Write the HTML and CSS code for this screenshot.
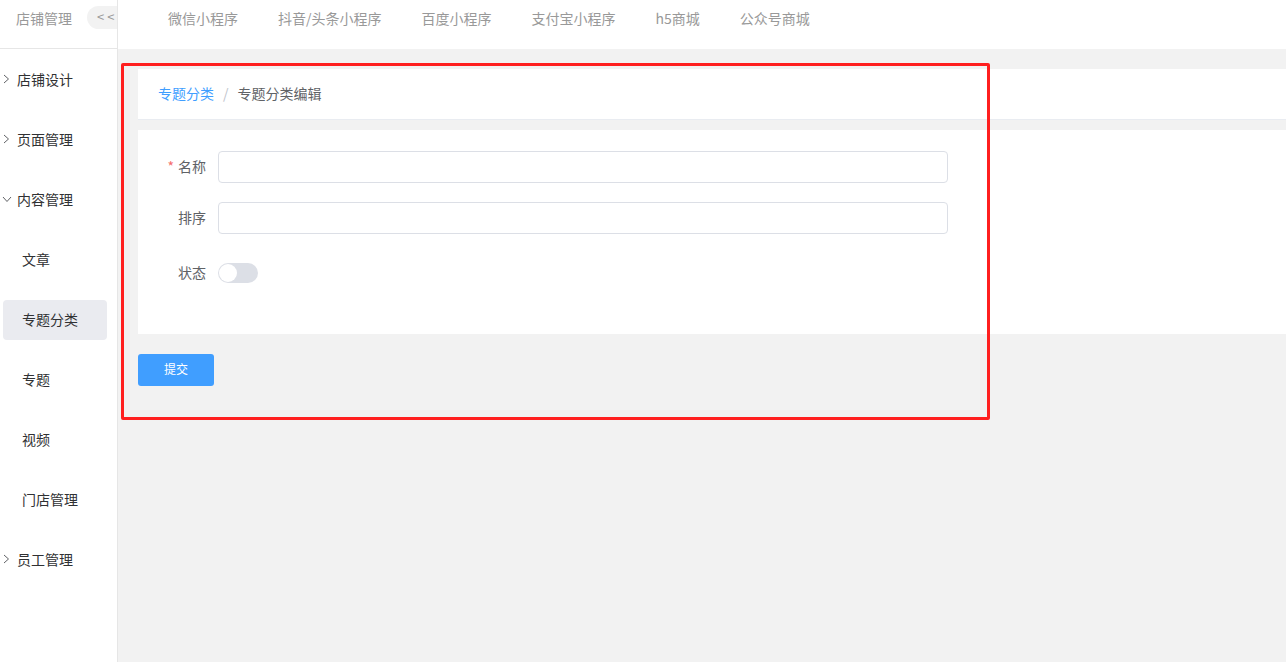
FILE: index.html
```html
<!DOCTYPE html>
<html>

<head>
    <meta charset="utf-8">
    <meta name="viewport" content="width=device-width, initial-scale=1.0">
    <title>专题分类编辑</title>
    <link rel="stylesheet" href="styles.css">
</head>

<body>
    <div class="layout">
        <div class="sidebar">
            <div class="side-head">
                <span class="side-title">店铺管理</span>
                <span class="collapse">&lt;&lt;</span>
            </div>
            <div class="menu">
                <div class="menu-item">
                    <svg class="arrow" width="7" height="10" viewBox="0 0 7 10"><path d="M1 1 L5.5 5 L1 9" fill="none" stroke="#606266" stroke-width="1"/></svg>
                    <span>店铺设计</span>
                </div>
                <div class="menu-item">
                    <svg class="arrow" width="7" height="10" viewBox="0 0 7 10"><path d="M1 1 L5.5 5 L1 9" fill="none" stroke="#606266" stroke-width="1"/></svg>
                    <span>页面管理</span>
                </div>
                <div class="menu-item">
                    <svg class="arrow down" width="10" height="7" viewBox="0 0 10 7"><path d="M1 1 L5 5.5 L9 1" fill="none" stroke="#606266" stroke-width="1"/></svg>
                    <span>内容管理</span>
                </div>
                <div class="menu-item sub">文章</div>
                <div class="menu-item sub active">专题分类</div>
                <div class="menu-item sub">专题</div>
                <div class="menu-item sub">视频</div>
                <div class="menu-item sub">门店管理</div>
                <div class="menu-item">
                    <svg class="arrow" width="7" height="10" viewBox="0 0 7 10"><path d="M1 1 L5.5 5 L1 9" fill="none" stroke="#606266" stroke-width="1"/></svg>
                    <span>员工管理</span>
                </div>
            </div>
        </div>

        <div class="right">
            <div class="topbar">
                <a class="nav-item">微信小程序</a>
                <a class="nav-item">抖音/头条小程序</a>
                <a class="nav-item">百度小程序</a>
                <a class="nav-item">支付宝小程序</a>
                <a class="nav-item">h5商城</a>
                <a class="nav-item">公众号商城</a>
            </div>
            <div class="main">
                <div class="crumbs">
                    <span class="crumb-link">专题分类</span>
                    <span class="crumb-sep">/</span>
                    <span class="crumb-cur">专题分类编辑</span>
                </div>
                <div class="form-card">
                    <div class="form-item">
                        <label class="form-label"><span class="req">*</span>名称</label>
                        <input class="form-input" type="text">
                    </div>
                    <div class="form-item">
                        <label class="form-label">排序</label>
                        <input class="form-input" type="text">
                    </div>
                    <div class="form-item tall">
                        <label class="form-label">状态</label>
                        <span class="switch"><span class="knob"></span></span>
                    </div>
                </div>
                <button class="btn-primary">提交</button>
            </div>
        </div>
    </div>
    <div class="annotation"></div>
</body>

</html>
```

FILE: styles.css
```css
body {
    margin: 0;
    padding: 0;
    font-family: "Noto Sans CJK SC", "Liberation Sans", sans-serif;
    font-size: 14px;
    color: #303133;
    background: #f2f2f2;
}

.layout {
    display: flex;
    min-height: 662px;
}

/* sidebar */
.sidebar {
    width: 117px;
    flex: none;
    background: #ffffff;
    border-right: 1px solid #e6e6e6;
    overflow: hidden;
}

.side-head {
    height: 49px;
    box-sizing: border-box;
    border-bottom: 1px solid #e6e6e6;
    display: flex;
    align-items: flex-start;
    padding-left: 16px;
}

.side-title {
    color: #999999;
    line-height: 36px;
    white-space: nowrap;
}

.collapse {
    flex: none;
    margin-top: 6px;
    margin-left: 15px;
    height: 23px;
    line-height: 21px;
    width: 50px;
    padding-left: 10px;
    box-sizing: border-box;
    border-radius: 12px;
    background: #f2f2f2;
    color: #999999;
    font-size: 13px;
    letter-spacing: 3px;
}

.menu {
    padding: 11px 10px 0 3px;
    display: flex;
    flex-direction: column;
    gap: 20px;
}

.menu-item {
    height: 40px;
    box-sizing: border-box;
    padding-bottom: 2px;
    display: flex;
    align-items: center;
    gap: 7px;
    color: #303133;
    border-radius: 4px;
    white-space: nowrap;
}

.arrow {
    flex: none;
}

.arrow.down {
    margin-left: -1px;
    margin-right: -2px;
}

.menu-item.sub {
    padding-left: 19px;
}

.menu-item.active {
    background: #eaebf0;
}

/* right side */
.right {
    flex: 1;
    min-width: 0;
}

.topbar {
    height: 49px;
    background: #ffffff;
    display: flex;
    padding-left: 30px;
}

.nav-item {
    padding: 0 20px;
    line-height: 36px;
    color: #999999;
    white-space: nowrap;
}

.main {
    padding: 20px 0 0 20px;
}

.crumbs {
    height: 51px;
    box-sizing: border-box;
    padding: 0 0 2px 20px;
    background: #ffffff;
    border-bottom: 1px solid #e9ecf1;
    margin-bottom: 10px;
    display: flex;
    align-items: center;
}

.crumb-link {
    color: #409eff;
}

.crumb-sep {
    color: #c0c4cc;
    margin: 0 9px;
}

.crumb-cur {
    color: #606266;
}

.form-card {
    background: #ffffff;
    padding: 21px 0 22px;
}

.form-item {
    display: flex;
    align-items: center;
    height: 32px;
    margin-bottom: 19px;
}

.form-item.tall {
    height: 40px;
}

.form-label {
    width: 80px;
    flex: none;
    box-sizing: border-box;
    padding: 0 12px 3px 0;
    text-align: right;
    color: #606266;
}

.req {
    color: #f56c6c;
    margin-right: 4px;
}

.form-input {
    width: 730px;
    height: 32px;
    box-sizing: border-box;
    border: 1px solid #dcdfe6;
    border-radius: 4px;
    padding: 0 12px;
    font-family: inherit;
    font-size: 14px;
    outline: none;
}

.switch {
    width: 40px;
    height: 20px;
    border-radius: 10px;
    background: #dcdfe6;
    position: relative;
}

.knob {
    position: absolute;
    left: 1px;
    top: 1px;
    width: 18px;
    height: 18px;
    border-radius: 50%;
    background: #ffffff;
}

.btn-primary {
    margin-top: 20px;
    width: 76px;
    height: 32px;
    padding: 0 0 3px;
    border: none;
    border-radius: 3px;
    background: #409eff;
    color: #ffffff;
    font-family: inherit;
    font-size: 12px;
}

/* red highlight box drawn over the screenshot */
.annotation {
    position: absolute;
    left: 121px;
    top: 63px;
    width: 869px;
    height: 357px;
    box-sizing: border-box;
    border: 3px solid #ff1f1f;
    border-radius: 2px;
}
```
